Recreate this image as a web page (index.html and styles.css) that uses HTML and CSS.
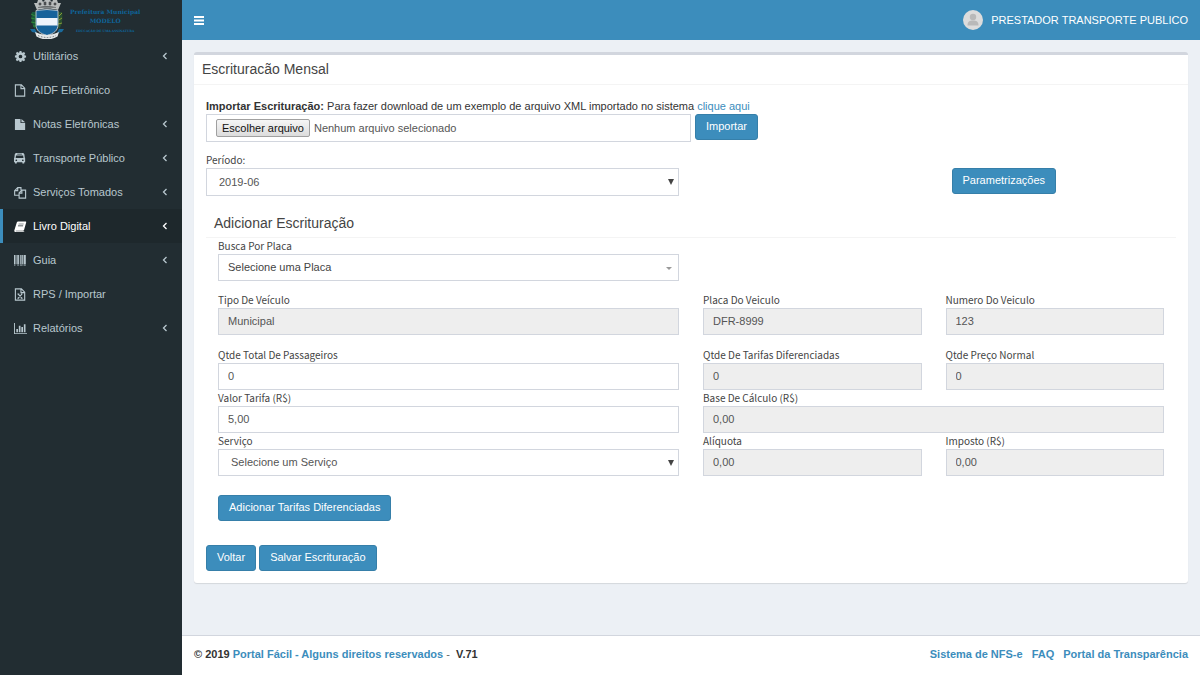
FILE: index.html
```html
<!DOCTYPE html>
<html lang="pt-BR">
<head>
<meta charset="utf-8">
<meta name="viewport" content="width=device-width, initial-scale=1">
<title>Escrituração Mensal</title>
<link rel="stylesheet" href="styles.css">
</head>
<body>
<div class="app">
  <aside class="sidebar">
    <div class="brand">
      <svg class="crest" viewBox="0 0 34 40" aria-hidden="true">
        <path d="M4 3l3 0 1-3h4l1 2 2-2h5l2 2 1-2h4l1 3 3 0-3 7c-6-2-15-2-21 0z" fill="#b9bdbd"/>
        <path d="M9 3h2v2H9zM14 2h2v3h-2zM19 2h2v3h-2zM24 3h2v2h-2zM8 7.500c6-1.500 12-1.500 18 0" fill="#4a4f50" stroke="#4a4f50" stroke-width=".6"/>
        <path d="M2 12c-1 6 0 14 3 17l1-2V12z" fill="#1c5a3b"/>
        <path d="M1 14l4 2M1 18l4 1M1 22l5 1M3 26l4 0" stroke="#2f8a3a" stroke-width="1"/>
        <path d="M32 12c1 6 0 14-3 17l-1-2V12z" fill="#29502f"/>
        <path d="M32 13l-3 3M32 18l-3 2M32 23l-4 1" stroke="#8a9a3a" stroke-width="1"/>
        <path d="M6 10.500q11-2 22 0v14c0 6-4 9-11 11-7-2-11-5-11-11z" fill="#17639b" stroke="#d8dcde" stroke-width=".8"/>
        <path d="M6.500 18h21v7.500h-21z" fill="#eef4fb"/>
        <path d="M0 29l5 0 2 4-5-1zM34 29l-5 0-2 4 5-1z" fill="#1a6a9c"/>
        <path d="M5 32q12 6 24 0l-1.500 4.500q-10.500 6-21 0z" fill="#e4e7e8"/>
        <path d="M8 35.500q9 4 18 0" fill="none" stroke="#6b7478" stroke-width="1" stroke-dasharray="1.500 1.500"/>
      </svg>
      <div class="brand-text">
        <span class="brand-name">Prefeitura Municipal</span>
        <span class="brand-name">MODELO</span>
        <span class="brand-sub">EDUCAÇÃO DE UMA ASSINATURA</span>
      </div>
    </div>
    <nav class="menu">
      <a class="item" href="#">
        <svg class="icon" viewBox="0 0 14 14"><path fill-rule="evenodd" d="M6 1h2l.3 1.600 1 .4 1.400-.9 1.400 1.400-.9 1.400.4 1L13 6v2l-1.500.3-.4 1 .9 1.400-1.400 1.400-1.400-.9-1 .4L8 13H6l-.3-1.500-1-.4-1.400.9-1.400-1.400.9-1.400-.4-1L1 8V6l1.500-.3.4-1L2 3.400 3.400 2l1.400.9 1-.4zM7 5a2 2 0 100 4 2 2 0 000-4z"/></svg>
        <span>Utilitários</span><svg class="chev" viewBox="0 0 6 8"><path d="M4.500 1L1.500 4l3 3"/></svg></a>
      <a class="item" href="#">
        <svg class="icon line" viewBox="0 0 14 14"><path d="M1.500 1h6.500l3.500 3.500V13h-10zM7.500 1v4h4"/></svg>
        <span>AIDF Eletrônico</span></a>
      <a class="item" href="#">
        <svg class="icon" viewBox="0 0 14 14"><path d="M1 1h6v4.500h5V13H1zM8 1l4 3.500H8z"/></svg>
        <span>Notas Eletrônicas</span><svg class="chev" viewBox="0 0 6 8"><path d="M4.500 1L1.500 4l3 3"/></svg></a>
      <a class="item" href="#">
        <svg class="icon" viewBox="0 0 14 14"><path fill-rule="evenodd" d="M3 1h6c1.500 0 2 .7 2.200 1.800L11.600 6l.4.700V11h-1v1.500H9V11H3v1.500H1V11H0V6.700L.4 6 .8 2.800C1 1.700 1.500 1 3 1zM3.500 2v.8h5V2zM2.200 3.800L1.800 6.500h8.400L9.800 3.800zM2.500 8a.9.9 0 100 1.800.9.9 0 000-1.800zM9.500 8a.9.9 0 100 1.800.9.9 0 000-1.800z"/></svg>
        <span>Transporte Público</span><svg class="chev" viewBox="0 0 6 8"><path d="M4.500 1L1.500 4l3 3"/></svg></a>
      <a class="item" href="#">
        <svg class="icon line" viewBox="0 0 14 14"><path d="M5 10H.7V5L4 1.800h3.500v2.700M4 2v3H1M5.500 7.500L8.500 4.500h4V13h-7zM8.500 4.700v3H5.700"/></svg>
        <span>Serviços Tomados</span><svg class="chev" viewBox="0 0 6 8"><path d="M4.500 1L1.500 4l3 3"/></svg></a>
      <a class="item active" href="#">
        <svg class="icon" viewBox="0 0 14 14"><path fill-rule="evenodd" d="M4.500 1.500h7.800c.8 0 1 .5.8 1.200l-2.300 8c-.2.600-.6.800-1.200.800H2.200c-.4 0-.5.600 0 .700h8.300l.6-.4-.1.700c-.2.400-.5.500-1 .5H1.800C.7 13 0 12 .4 11L3 2.700c.2-.8.800-1.200 1.500-1.200zM5 4l-.2.700h5.500l.2-.7zM4.400 6l-.2.700h5.500l.2-.7z"/></svg>
        <span>Livro Digital</span><svg class="chev" viewBox="0 0 6 8"><path d="M4.500 1L1.500 4l3 3"/></svg></a>
      <a class="item" href="#">
        <svg class="icon" viewBox="0 0 14 14"><path d="M0 1h1.500v10H0zM2 1h.7v10H2zM3.500 1h1.800v10H3.500zM6.300 1h1v10h-1zM8 1h1.500v10H8zM10.300 1h2.400v10h-2.400zM0 11.700h1.500v.8H0zM3.500 11.700h1.800v.8H3.500zM6.300 11.700h3v.8h-3zM10.300 11.700h2.400v.8h-2.400z"/></svg>
        <span>Guia</span><svg class="chev" viewBox="0 0 6 8"><path d="M4.500 1L1.500 4l3 3"/></svg></a>
      <a class="item" href="#">
        <svg class="icon line" viewBox="0 0 14 14"><path d="M1.500 1h6.500l3.500 3.500V13h-10zM7.500 1v4h4M4.500 6.500l4 4.500M8.500 6.500l-4 4.500M3.700 6.500h2M7.500 6.500h1.600M3.700 11h1.800M7.300 11h2"/></svg>
        <span>RPS / Importar</span></a>
      <a class="item" href="#">
        <svg class="icon" viewBox="0 0 14 14"><path d="M0 1h1v11h13v1H0zM2.500 7.500h1.800V11H2.500zM5.200 4H7v7H5.200zM7.900 5.500h1.800V11H7.900zM10.600 2.500h1.800V11h-1.800z"/></svg>
        <span>Relatórios</span><svg class="chev" viewBox="0 0 6 8"><path d="M4.500 1L1.500 4l3 3"/></svg></a>
    </nav>
  </aside>

  <div class="main">
    <header class="topbar">
      <button class="toggle" type="button" aria-label="Menu"><svg viewBox="0 0 10 9"><path d="M0 0h10v2H0zM0 3.500h10v2H0zM0 7h10v2H0z"/></svg></button>
      <a class="user" href="#">
        <svg class="avatar" viewBox="0 0 20 20"><circle cx="10" cy="10" r="10" fill="#dcdcdc"/><circle cx="10" cy="7" r="3.200" fill="#b9b9b9"/><path d="M4.500 15.500c0-4 2-5 5.500-5s5.500 1 5.500 5z" fill="#b9b9b9"/></svg>
        <span>PRESTADOR TRANSPORTE PUBLICO</span>
      </a>
    </header>

    <main class="content">
      <section class="box">
        <h1 class="box-title">Escrituracão Mensal</h1>
        <form class="box-body">
          <p class="import-note"><strong>Importar Escrituração:</strong> Para fazer download de um exemplo de arquivo XML importado no sistema <a href="#">clique aqui</a></p>
          <div class="import-row">
            <label class="file control" for="arquivo">
              <input class="file-input" type="file" id="arquivo">
              <span class="file-button">Escolher arquivo</span>
              <span>Nenhum arquivo selecionado</span>
            </label>
            <button class="btn" type="button">Importar</button>
          </div>

          <div class="period-row">
            <div class="field">
              <label for="periodo">Período:</label>
              <div class="select"><select class="control" id="periodo"><option>2019-06</option></select></div>
            </div>
            <div class="param"><button class="btn" type="button">Parametrizações</button></div>
          </div>

          <h2 class="section-title">Adicionar Escrituração</h2>
          <div class="rows">
            <div class="grid spaced">
              <div class="field wide"><label for="placa-busca">Busca Por Placa</label>
                <div class="select light"><select class="control" id="placa-busca"><option>Selecione uma Placa</option></select></div></div>
            </div>
            <div class="grid spaced">
              <div class="field wide"><label for="tipo">Tipo De Veículo</label><input class="control" id="tipo" value="Municipal" readonly></div>
              <div class="field"><label for="placa">Placa Do Veiculo</label><input class="control" id="placa" value="DFR-8999" readonly></div>
              <div class="field"><label for="numero">Numero Do Veiculo</label><input class="control" id="numero" value="123" readonly></div>
            </div>
            <div class="grid">
              <div class="field wide"><label for="total">Qtde Total De Passageiros</label><input class="control" id="total" value="0"></div>
              <div class="field"><label for="dif">Qtde De Tarifas Diferenciadas</label><input class="control" id="dif" value="0" readonly></div>
              <div class="field"><label for="normal">Qtde Preço Normal</label><input class="control" id="normal" value="0" readonly></div>
              <div class="field wide"><label for="tarifa">Valor Tarifa (R$)</label><input class="control" id="tarifa" value="5,00"></div>
              <div class="field wide"><label for="base">Base De Cálculo (R$)</label><input class="control" id="base" value="0,00" readonly></div>
              <div class="field wide"><label for="servico">Serviço</label>
                <div class="select"><select class="control" id="servico"><option>Selecione um Serviço</option></select></div></div>
              <div class="field"><label for="aliquota">Alíquota</label><input class="control" id="aliquota" value="0,00" readonly></div>
              <div class="field"><label for="imposto">Imposto (R$)</label><input class="control" id="imposto" value="0,00" readonly></div>
            </div>
            <div class="add-row"><button class="btn" type="button">Adicionar Tarifas Diferenciadas</button></div>
          </div>
          <div class="actions">
            <button class="btn" type="button">Voltar</button>
            <button class="btn" type="button">Salvar Escrituração</button>
          </div>
        </form>
      </section>
    </main>

    <footer class="footer">
      <div>© 2019 <a href="#">Portal Fácil - Alguns direitos reservados</a> <span class="dash">-</span>&nbsp; V.71</div>
      <nav class="footer-links"><a href="#">Sistema de NFS-e</a><a href="#">FAQ</a><a href="#">Portal da Transparência</a></nav>
    </footer>
  </div>
</div>
</body>
</html>
```
FILE: styles.css
```css
* { box-sizing: border-box; }
body {
  margin: 0;
  font: 11px/16px "Liberation Sans", Arial, sans-serif;
  color: #333;
}
a { color: #3c8dbc; text-decoration: none; }
button, input, select { font: inherit; }

.app { display: flex; min-height: 100vh; }

.sidebar { flex: 0 0 182px; background: #222d32; }
.brand { display: flex; gap: 6px; height: 39px; padding-left: 30px; overflow: hidden; }
.crest { width: 34px; height: 40px; flex: none; }
.brand-text {
  display: flex; flex-direction: column; align-items: center;
  padding-top: 7px; color: #0e6499; white-space: nowrap;
}
.brand-name { font: bold 6px/9px "DejaVu Serif", serif; }
.brand-sub { font: bold 3px/12px "DejaVu Serif", serif; }

.item {
  display: flex; align-items: center; height: 34px;
  padding: 0 14px 0 11px; border-left: 3px solid transparent; color: #b8c7ce;
}
.item.active { color: #fff; background: #1e282c; border-left-color: #3c8dbc; }
.icon { width: 13px; height: 13px; margin-right: 6px; fill: currentColor; }
.icon.line { fill: none; stroke: currentColor; stroke-width: 1.2; }
.chev { width: 6px; height: 8px; margin-left: auto; fill: none; stroke: currentColor; stroke-width: 1.3; }

.main { flex: 1; min-width: 0; display: flex; flex-direction: column; background: #ecf0f5; }
.topbar {
  display: flex; align-items: center; justify-content: space-between;
  height: 40px; padding: 0 12px; background: #3c8dbc;
}
.toggle { padding: 0; border: 0; background: none; line-height: 0; }
.toggle svg { width: 10px; height: 9px; fill: #fff; }
.user { display: flex; align-items: center; gap: 8px; color: #fff; }
.avatar { width: 20px; height: 20px; }

.content { flex: 1; padding: 12px; }
.box {
  background: #fff; border-top: 3px solid #d2d6de; border-radius: 3px;
  box-shadow: 0 1px 1px rgba(0, 0, 0, .1);
}
.box-title {
  margin: 0; padding: 4px 8px 5px; border-bottom: 1px solid #f4f4f4;
  font-size: 14px; line-height: 20px; font-weight: normal; color: #444;
}
.box-body { padding: 13px 12px 12px; }
.import-note { margin: 0; }
.import-row { display: flex; align-items: flex-start; gap: 4px; }
.file { display: flex; align-items: center; gap: 4px; flex: 0 0 50%; cursor: pointer; }
.file-input { position: absolute; width: 1px; height: 1px; opacity: 0; }
.file-button {
  padding: 0 5px; border: 1px solid #a0a0a0; border-radius: 2px;
  background: linear-gradient(#f6f6f6, #dcdcdc); color: #111;
}

.control {
  width: 100%; height: 28px; padding: 0 9px 1px;
  border: 1px solid #d2d6de; border-radius: 0; background: #fff; color: #555;
}
.control:read-only:is(input) { background: #eee; }
.field label {
  display: block; color: #444;
  font: 10px/16px "Noto Sans CJK SC", "Noto Sans", sans-serif;
}
.select { position: relative; }
.select select { appearance: none; padding-left: 12px; }
.select.light select { padding-left: 9px; color: #444; }
.select::after {
  content: ""; position: absolute; right: 5px; top: 11px;
  border: 3px solid transparent; border-top: 6px solid #444; border-bottom: 0;
}
.select.light::after { right: 7px; top: 13px; border-top: 3px solid #999; }

.period-row { display: grid; grid-template-columns: repeat(4, 1fr); column-gap: 24px; margin-top: 10px; }
.period-row .field { grid-column: span 2; }
.param { grid-column: 4; padding-top: 16px; }

.section-title {
  margin: 17px 0 0; padding: 0 8px 4px; border-bottom: 1px solid #f4f4f4;
  font-size: 14px; line-height: 20px; font-weight: normal; color: #444;
}
.rows { padding: 0 12px; }
.grid { display: grid; grid-template-columns: repeat(4, 1fr); column-gap: 24px; }
.grid .control { height: 27px; }
.spaced { margin-bottom: 12px; }
.spaced:first-child { margin-bottom: 11px; }
.wide { grid-column: span 2; }
.add-row { padding-top: 19px; }
.actions { display: flex; gap: 3px; margin-top: 24px; }

.btn {
  height: 26px; padding: 0 10px 2px; border: 1px solid #367fa9; border-radius: 3px;
  background: #3c8dbc; color: #fff;
}

.footer {
  display: flex; justify-content: space-between; padding: 10px 12px 13px;
  border-top: 1px solid #d2d6de; background: #fff; font-weight: bold;
}
.footer-links { display: flex; gap: 9px; }
.dash { color: #666; font-weight: normal; }
```
